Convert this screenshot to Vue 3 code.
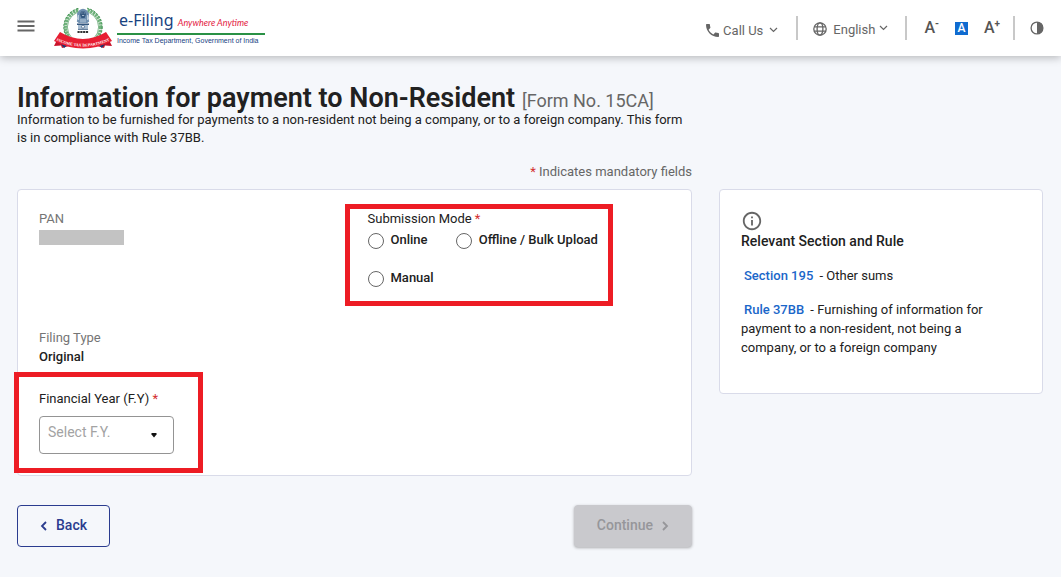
<script setup>
import {ref} from "vue";

const mode=ref("");
const year=ref("");
const modes=["Online","Offline / Bulk Upload","Manual"];
</script>

<template>
  <div class="page">
    <header class="header">
      <button class="icon-button menu-button" aria-label="Menu">
        <svg width="18" height="12" viewBox="0 0 18 12"><path d="M0.5 1.5h17M0.5 6h17M0.5 10.5h17" stroke="#666" stroke-width="1.8"/></svg>
      </button>
      <a href="#" class="brand">
        <svg class="emblem" width="60" height="42" viewBox="0 0 60 42">
          <!-- wreath -->
          <circle cx="30" cy="20" r="17.6" fill="none" stroke="#6fb27b" stroke-width="3.4" stroke-dasharray="2.4 0.6"/>
          <circle cx="30" cy="20" r="19.2" fill="none" stroke="#3b8d4c" stroke-width="1" stroke-dasharray="2 1.6"/>
          <circle cx="30" cy="20" r="15.6" fill="#fff" stroke="#3b8d4c" stroke-width="0.6"/>
          <path d="M26 0h8v4h-8z" fill="#fff"/>
          <!-- lion capital -->
          <path d="M26 3.5q4-3.5 8 0l2 3-.6 5 .8 3-2 1.6h-8.400l-2-1.600.8-3-.6-5z" fill="#6f8fb0"/>
          <path d="M28 4.500h4l1 3-1.400 3.500h-3.200l-1.400-3.500z" fill="#34577f"/>
          <path d="M28.500 6h.9M30.800 6h.9M29 8.500h2.200M25.500 8v5M34.500 8v5M28 12v3.500M30 12v3.500M32 12v3.500" stroke="#dce7f1" stroke-width=".7"/>
          <path d="M24 16.500h12v1.400H24zM25 21.500h10v1.300H25z" fill="#34577f"/>
          <path d="M25 18h10v3.500H25z" fill="#a9bed2"/>
          <circle cx="30" cy="19.700" r="1.500" fill="#fff" stroke="#34577f" stroke-width=".7"/>
          <path d="M24.500 25h11" stroke="#333" stroke-width="1.800" stroke-dasharray="2.200 .6"/>
          <!-- ribbon -->
          <path d="M5 31L1 39l7-.5 1 2.500 7-2-4-6z" fill="#c8142b"/>
          <path d="M55 31l4 8-7-.5-1 2.500-7-2 4-6z" fill="#c8142b"/>
          <path d="M8 37l6 1.500-3 2.500zM52 37l-6 1.500 3 2.500z" fill="#163a74"/>
          <path d="M7 25Q30 39 53 25L59 34Q30 49 1 34z" fill="#e71e32"/>
          <path id="ribbon-line" d="M1 32.500Q30 46.500 59 32.500" fill="none"/>
          <text class="ribbon-text"><textPath href="#ribbon-line" startOffset="50%" text-anchor="middle">INCOME TAX DEPARTMENT</textPath></text>
        </svg>
        <span class="brand-text">
          <span class="brand-top">e-Filing <em>Anywhere Anytime</em></span>
          <span class="brand-bottom">Income Tax Department, Government of India</span>
        </span>
      </a>
      <nav class="tools">
        <button class="tool call">
          <svg width="13" height="13" viewBox="3 3 18 18"><path fill="#666" d="M6.620 10.790c1.440 2.830 3.760 5.140 6.590 6.590l2.200-2.200c.27-.27.67-.36 1.020-.24 1.120.37 2.330.57 3.570.57.55 0 1 .45 1 1V20c0 .55-.45 1-1 1-9.390 0-17-7.610-17-17 0-.55.45-1 1-1h3.500c.55 0 1 .45 1 1 0 1.250.2 2.450.57 3.570.11.35.03.74-.25 1.020z"/></svg>
          <span>Call Us</span>
          <svg width="9" height="6" viewBox="0 0 9 6"><path d="M1 1l3.500 3.500L8 1" fill="none" stroke="#666" stroke-width="1.200"/></svg>
        </button>
        <button class="tool language">
          <svg width="14" height="14" viewBox="0 0 14 14" fill="none" stroke="#666" stroke-width="1.300"><circle cx="7" cy="7" r="6.200"/><ellipse cx="7" cy="7" rx="2.900" ry="6.200"/><path d="M1.200 4.800h11.600M1.200 9.200h11.600"/></svg>
          <span>English</span>
          <svg class="raised" width="9" height="6" viewBox="0 0 9 6"><path d="M1 1l3.500 3.500L8 1" fill="none" stroke="#666" stroke-width="1.200"/></svg>
        </button>
        <div class="sizes">
          <button class="size" aria-label="Decrease text size">A<sup>-</sup></button>
          <button class="size active">A</button>
          <button class="size" aria-label="Increase text size">A<sup>+</sup></button>
        </div>
        <button class="icon-button contrast" aria-label="Contrast">
          <svg width="14" height="14" viewBox="0 0 14 14"><circle cx="7" cy="7" r="5.900" fill="#fff" stroke="#666" stroke-width="1.300"/><path d="M7 1a6 6 0 0 1 0 12z" fill="#666"/></svg>
        </button>
      </nav>
    </header>

    <main class="content">
      <div class="intro">
        <h1>Information for payment to Non-Resident <small>[Form No. 15CA]</small></h1>
        <p>Information to be furnished for payments to a non-resident not being a company, or to a foreign company. This form is in compliance with Rule 37BB.</p>
        <p class="mandatory"><span class="star">*</span> Indicates mandatory fields</p>
      </div>

      <form class="card form-card" @submit.prevent>
        <div class="pan">
          <div class="caption">PAN</div>
          <div class="pan-value"></div>
        </div>
        <div class="marked modes">
          <fieldset>
            <legend>Submission Mode <span class="star">*</span></legend>
            <div class="options">
              <label v-for="item in modes" :key="item">
                <input type="radio" name="mode" :value="item" v-model="mode">
                <span>{{item}}</span>
              </label>
            </div>
          </fieldset>
        </div>
        <div class="filing">
          <div class="caption">Filing Type</div>
          <div class="strong">Original</div>
        </div>
        <div class="marked year">
          <label for="year">Financial Year (F.Y) <span class="star">*</span></label>
          <div class="select-box">
            <select id="year" v-model="year">
              <option value="">Select F.Y.</option>
            </select>
            <svg class="arrow" width="6" height="5" viewBox="0 0 6 5"><path d="M.5 0h5v1.500L3 4.500.5 1.500z" fill="#111"/></svg>
          </div>
        </div>
      </form>

      <aside class="card info-card">
        <svg width="22" height="22" viewBox="0 0 24 24"><path fill="#666" d="M11 7h2v2h-2zm0 4h2v6h-2zm1-9C6.480 2 2 6.480 2 12s4.480 10 10 10 10-4.480 10-10S17.520 2 12 2zm0 18c-4.410 0-8-3.590-8-8s3.590-8 8-8 8 3.590 8 8-3.590 8-8 8z"/></svg>
        <h2>Relevant Section and Rule</h2>
        <p><a href="#">Section 195</a> <span>- Other sums</span></p>
        <p><a href="#">Rule 37BB</a> <span>- Furnishing of information for payment to a non-resident, not being a company, or to a foreign company</span></p>
      </aside>

      <div class="actions">
        <button class="button back">
          <svg width="8" height="10" viewBox="0 0 8 10"><path d="M6 1L2 5l4 4" fill="none" stroke="#2b3c8f" stroke-width="1.800"/></svg>
          Back
        </button>
        <button class="button continue" disabled>
          Continue
          <svg width="8" height="10" viewBox="0 0 8 10"><path d="M2 1l4 4-4 4" fill="none" stroke="#96969a" stroke-width="1.800"/></svg>
        </button>
      </div>
    </main>
  </div>
</template>

<style>
body {
  background-color: #f5f7fb;
}
</style>

<style scoped>
.page {
  font-family: Roboto, "Liberation Sans", sans-serif;
  font-size: 13px;
  line-height: 18px;
  color: #212121;
}
button, select {
  font-family: inherit;
  cursor: pointer;
}
h1, h2, p, fieldset, legend {
  margin: 0;
  padding: 0;
}
fieldset {
  min-width: 0;
  border: none;
}
svg {
  flex: none;
}
.header {
  display: flex;
  align-items: center;
  height: 56px;
  padding: 0 17px;
  background-color: #fff;
  box-shadow: 0 2px 8px rgba(0, 0, 0, 0.25);
}
.icon-button {
  display: flex;
  padding: 0;
  border: none;
  background: none;
}
.menu-button {
  padding-bottom: 4px;
}
.brand {
  display: flex;
  align-items: center;
  gap: 4px;
  margin-left: 18px;
  color: #17427f;
  text-decoration: none;
}
.ribbon-text {
  font: bold 4px "Liberation Serif", serif;
  fill: #fff;
}
.brand-text {
  display: flex;
  flex-direction: column;
  min-width: 148px;
}
.brand-top {
  padding: 0 2px;
  border-bottom: 2px solid #2a9145;
  font-family: "Noto Sans", sans-serif;
  font-size: 16px;
  line-height: 20px;
}
.brand-top em {
  font-family: Lato, "Liberation Sans", sans-serif;
  font-size: 9px;
  color: #e3173e;
}
.brand-bottom {
  font-family: "Liberation Sans", sans-serif;
  font-size: 7px;
  line-height: 12px;
}
.tools {
  display: flex;
  align-items: center;
  margin-left: auto;
  color: #666;
}
.tool {
  display: flex;
  align-items: center;
  gap: 4px;
  height: 24px;
  padding: 0 18px 0 0;
  border: none;
  border-right: 2px solid #c8c8c8;
  background: none;
  font-size: 13px;
  color: #666;
}
.call svg:last-child {
  margin-left: 2px;
}
.call svg, .call span {
  padding-top: 4px;
  box-sizing: content-box;
}
.language {
  padding: 0 17px 0 15px;
}
.language span {
  margin-left: 2px;
}
.language svg, .language span {
  padding-top: 2px;
  box-sizing: content-box;
}
.language .raised {
  padding: 0;
}
.sizes {
  display: flex;
  align-items: center;
  gap: 16px;
  height: 24px;
  padding: 0 13px 0 17px;
  border-right: 2px solid #c8c8c8;
}
.size {
  padding: 0;
  border: none;
  background: none;
  font-size: 16px;
  line-height: 16px;
  font-weight: 500;
  color: #555;
}
.size sup {
  font-size: 10px;
  line-height: 1px;
  font-weight: 700;
}
.size.active {
  width: 13px;
  height: 13px;
  background-color: #0f6bd0;
  font-size: 12px;
  line-height: 13px;
  color: #fff;
}
.contrast {
  margin-left: 15px;
}
.content {
  display: grid;
  grid-template-columns: 25fr 12fr;
  column-gap: 27px;
  align-items: start;
  padding: 32px 18px 30px 17px;
}
.intro {
  grid-column: 1;
}
h1 {
  font-size: 27px;
  line-height: 20px;
  font-weight: 600;
  white-space: nowrap;
}
h1 small {
  font-size: 18px;
  font-weight: 400;
  color: #666;
}
.mandatory {
  padding: 16px 0 8px;
  text-align: right;
  color: #666;
}
.star {
  color: #d32f2f;
}
.card {
  border: 1px solid #d9dbe9;
  border-radius: 4px;
  background-color: #fff;
}
.form-card {
  display: grid;
  grid-column: 1;
  grid-template-columns: 1fr 1fr;
  column-gap: 26px;
  padding: 20px 21px 21px;
}
.caption {
  color: #757575;
}
.pan {
  min-height: 119px;
}
.pan-value {
  width: 85px;
  height: 15px;
  margin-top: 2px;
  background-color: #c3c3c3;
}
.marked {
  position: relative;
}
.marked::before {
  content: "";
  position: absolute;
  border: 5px solid #ed1c24;
  pointer-events: none;
}
.modes {
  align-self: start;
  justify-self: start;
}
.modes::before {
  inset: -6px -15px -16px -23px;
}
.options {
  display: grid;
  grid-template-columns: auto auto;
  gap: 14px 22px;
}
.options label {
  display: flex;
  align-items: center;
  gap: 7px;
  height: 24px;
  font-weight: 500;
}
.options input {
  appearance: none;
  width: 16px;
  height: 16px;
  margin: 2px 0 0;
  border: 1px solid #666;
  border-radius: 50%;
  background-color: #fff;
}
.options input:checked {
  border: 5px solid #2b3c8f;
}
.filing, .year {
  grid-column: 1;
  justify-self: start;
}
.strong {
  font-weight: 500;
  line-height: 20px;
}
.year {
  margin-top: 23px;
}
.year::before {
  inset: -18px -29px -19px -25px;
}
.year label {
  display: block;
}
.select-box {
  position: relative;
  width: 135px;
  margin-top: 8px;
}
.select-box select {
  appearance: none;
  display: block;
  width: 100%;
  height: 38px;
  padding: 0 8px 6px;
  border: 1px solid #949494;
  border-radius: 4px;
  background-color: #fff;
  font-size: 14px;
  color: #a3a3a3;
}
.arrow {
  position: absolute;
  top: 17px;
  right: 17px;
}
.info-card {
  padding: 20px 36px 36px 21px;
}
.info-card svg {
  display: block;
}
h2 {
  padding-bottom: 1px;
  font-size: 14px;
  line-height: 18px;
  font-weight: 500;
}
.info-card p {
  margin-top: 15px;
  line-height: 19px;
}
.info-card a {
  margin: 0 3px;
  font-weight: 500;
  color: #1a66c9;
  text-decoration: none;
}
.actions {
  display: flex;
  grid-column: 1;
  justify-content: space-between;
  margin-top: 29px;
}
.button {
  display: flex;
  align-items: center;
  gap: 8px;
  height: 42px;
  padding: 0 22px 2px;
  border: 1px solid #2b3c8f;
  border-radius: 4px;
  background: none;
  font-size: 14px;
  font-weight: 500;
  color: #2b3c8f;
}
.button svg {
  padding-top: 2px;
  box-sizing: content-box;
}
.continue {
  border-color: #c9c9cd;
  background-color: #c9c9cd;
  box-shadow: 0 1px 3px rgba(0, 0, 0, 0.3);
  color: #96969a;
}
</style>
